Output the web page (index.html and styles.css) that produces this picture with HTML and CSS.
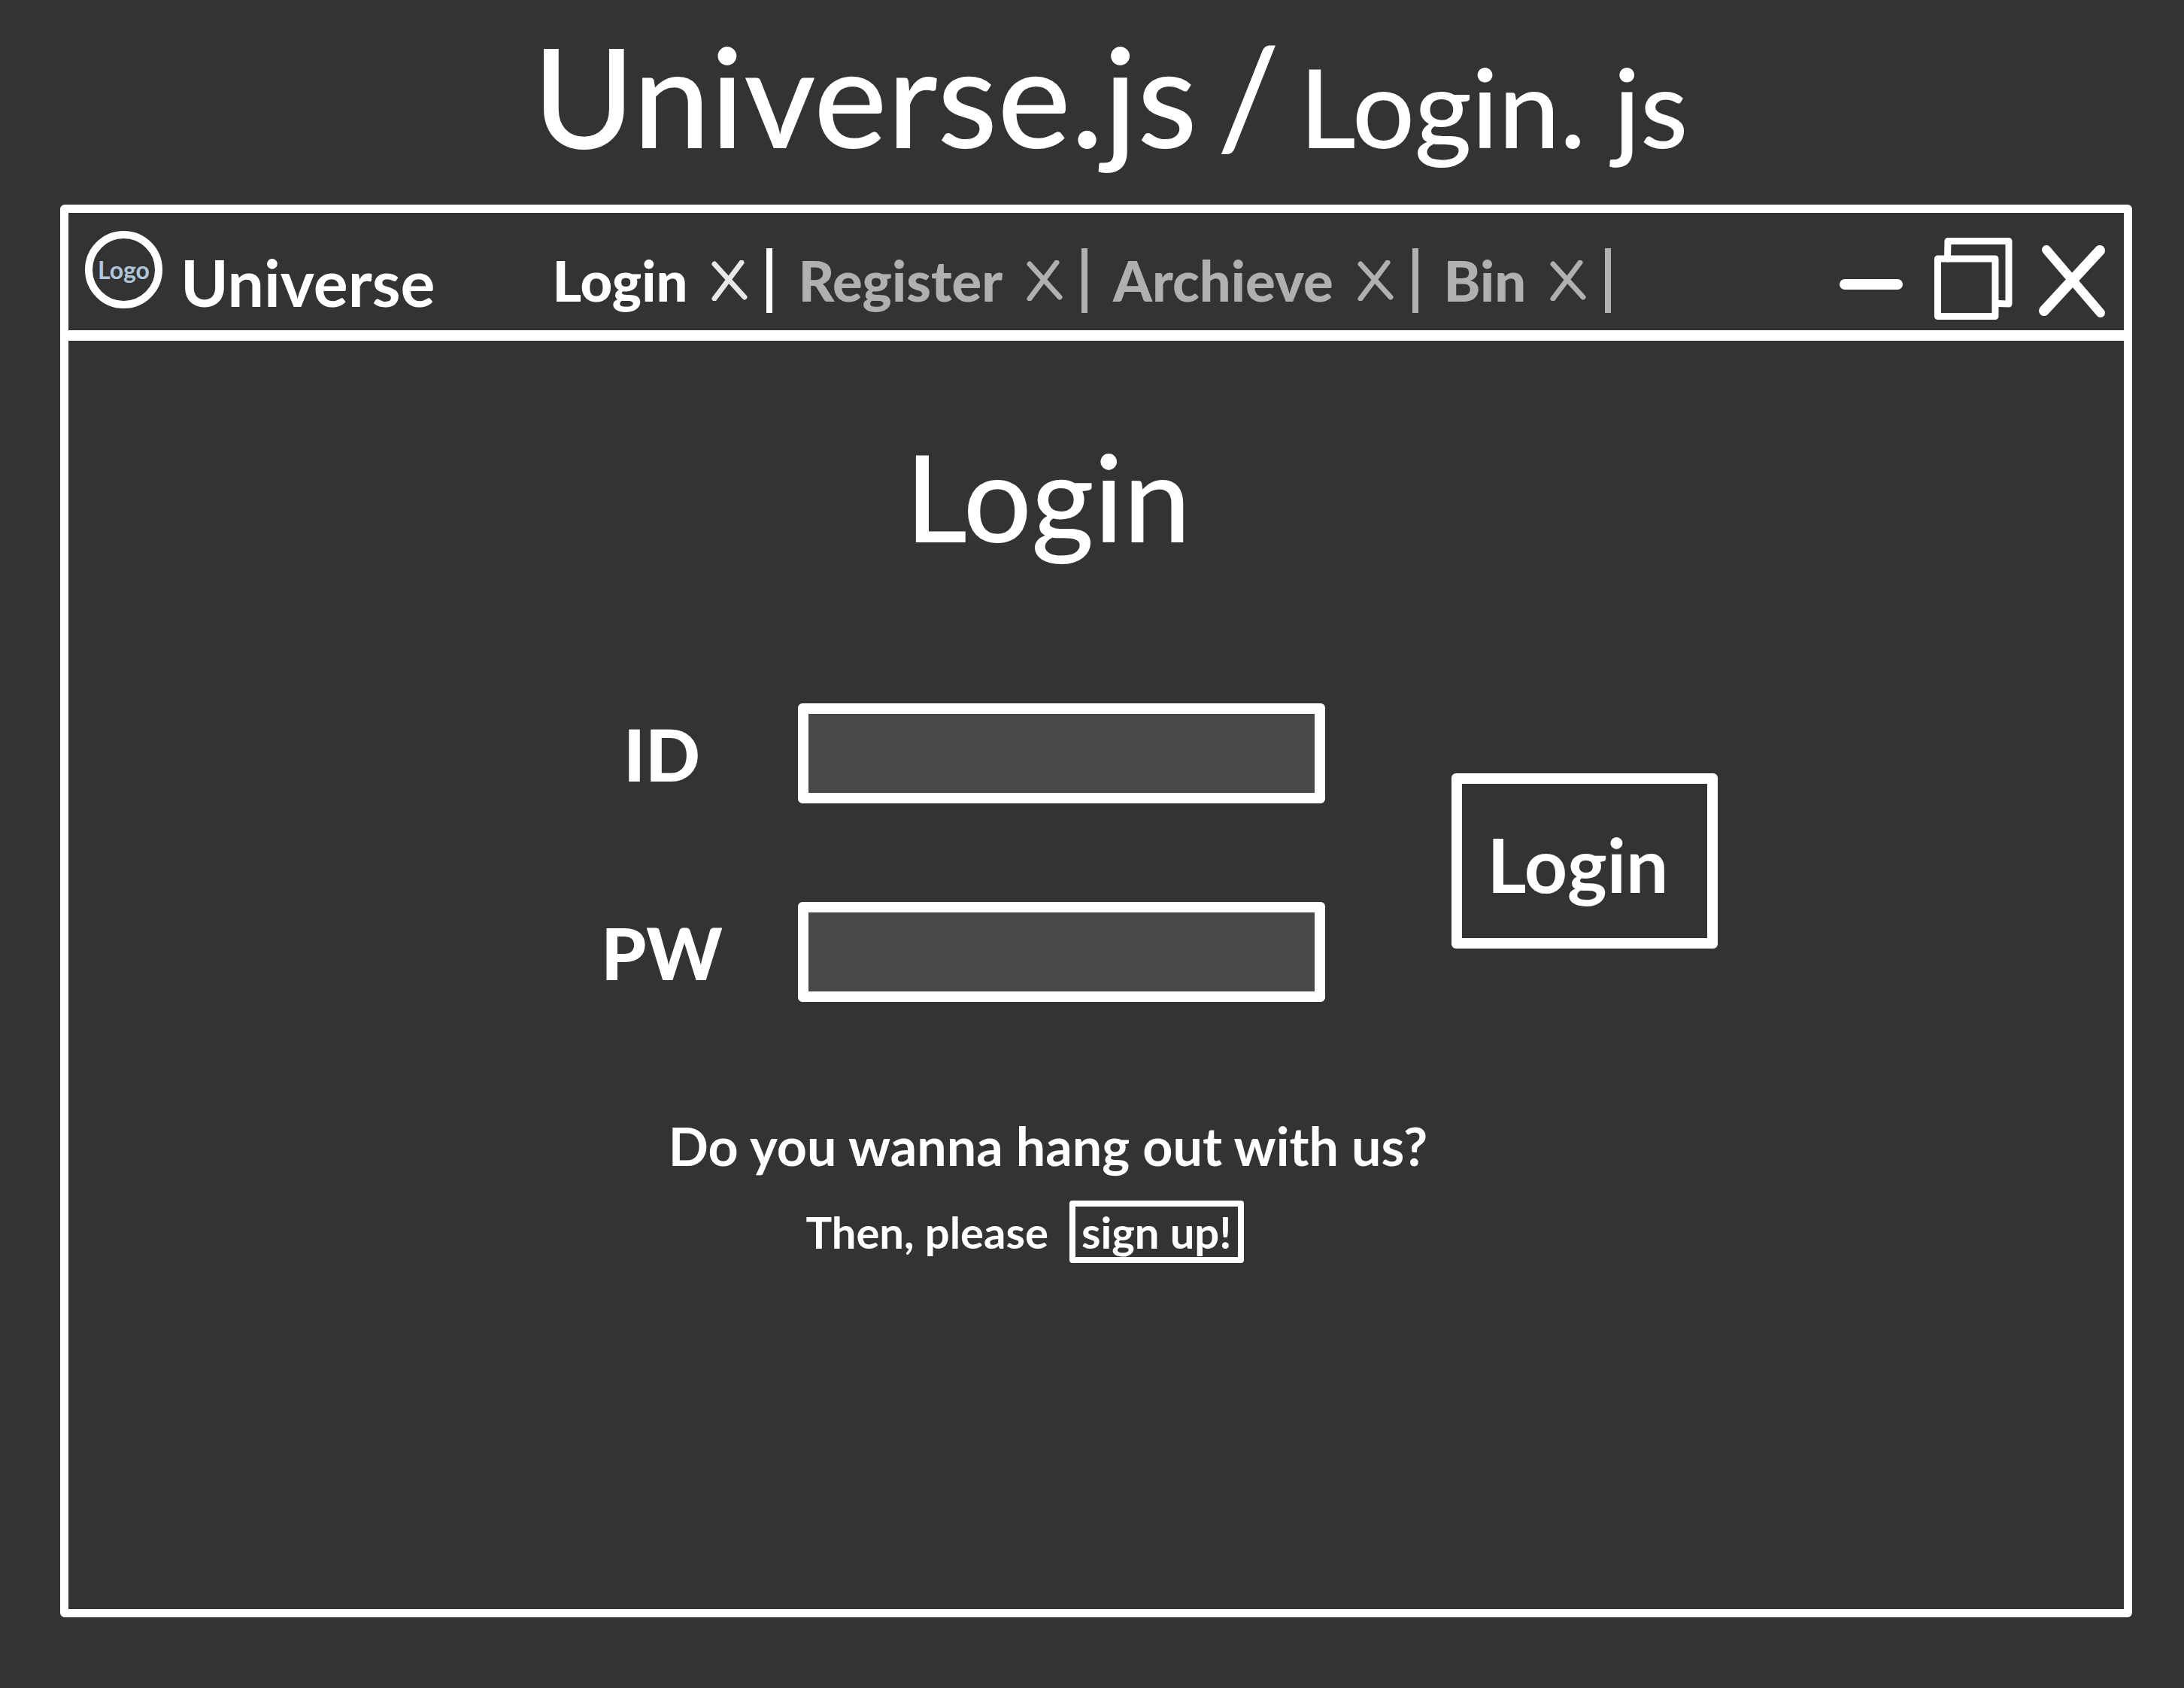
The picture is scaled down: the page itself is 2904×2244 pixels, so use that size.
FILE: index.html
```html
<!DOCTYPE html>
<html lang="en">
<head>
  <meta charset="utf-8">
  <meta name="viewport" content="width=device-width, initial-scale=1">
  <title>Universe – Login</title>
  <link rel="stylesheet" href="styles.css">
</head>
<body>
  <div class="page">
    <header class="page-title">
      <span class="page-title-app">Universe.js</span>
      <span class="page-title-app">/</span>
      <span class="page-title-file">Login. js</span>
    </header>

    <section class="window">
      <div class="titlebar">
        <div class="logo">Logo</div>
        <div class="brand">Universe</div>
        <nav class="tabs">
          <div class="tab tab-active">
            <a class="tab-link" href="#login">Login</a>
            <button class="tab-close" type="button" aria-label="Close Login">
              <svg class="tab-x" viewBox="0 0 48 54"><path d="M4 5 44 49M40 3 4 51"/></svg>
            </button>
          </div>
          <div class="tab">
            <a class="tab-link" href="#register">Register</a>
            <button class="tab-close" type="button" aria-label="Close Register">
              <svg class="tab-x" viewBox="0 0 48 54"><path d="M4 5 44 49M40 3 4 51"/></svg>
            </button>
          </div>
          <div class="tab">
            <a class="tab-link" href="#archieve">Archieve</a>
            <button class="tab-close" type="button" aria-label="Close Archieve">
              <svg class="tab-x" viewBox="0 0 48 54"><path d="M4 5 44 49M40 3 4 51"/></svg>
            </button>
          </div>
          <div class="tab">
            <a class="tab-link" href="#bin">Bin</a>
            <button class="tab-close" type="button" aria-label="Close Bin">
              <svg class="tab-x" viewBox="0 0 48 54"><path d="M4 5 44 49M40 3 4 51"/></svg>
            </button>
          </div>
        </nav>
        <div class="window-controls">
          <button class="control" type="button" aria-label="Minimize">
            <svg width="92" height="110" viewBox="0 0 92 110"><path d="M7 62H77" stroke-width="14"/></svg>
          </button>
          <button class="control" type="button" aria-label="Restore">
            <svg width="104" height="110" viewBox="0 0 104 110" stroke-width="9">
              <path d="M17.500 28 18 4.500H99V88L85 87.500"/>
              <path d="M4.500 28H81V104.500H4.500Z"/>
            </svg>
          </button>
          <button class="control" type="button" aria-label="Close">
            <svg width="90" height="110" viewBox="0 0 90 110">
              <path d="M11 16 83 100" stroke-width="12"/>
              <path d="M82 17 8 97" stroke-width="14"/>
            </svg>
          </button>
        </div>
      </div>

      <main class="content">
        <div class="login">
          <h1 class="login-title">Login</h1>
          <form class="login-form">
            <div class="fields">
              <label class="field-label" for="user-id">ID</label>
              <input class="field-input" id="user-id" type="text">
              <label class="field-label" for="user-pw">PW</label>
              <input class="field-input" id="user-pw" type="password">
            </div>
            <button class="login-button" type="button">Login</button>
          </form>
          <p class="invite">Do you wanna hang out with us?</p>
          <p class="signup">Then, please <a class="signup-link" href="#signup">sign up!</a></p>
        </div>
      </main>
    </section>
  </div>
</body>
</html>
```

FILE: styles.css
```css
* {
  box-sizing: border-box;
}

body {
  margin: 0;
  background: #333333;
  color: #ffffff;
  font-family: Lato, "Open Sans", sans-serif;
}

button {
  padding: 0;
  border: 0;
  background: none;
  color: inherit;
  font: inherit;
  cursor: pointer;
}

a {
  color: inherit;
  text-decoration: none;
}

svg {
  display: block;
  fill: none;
  stroke: currentColor;
  stroke-linecap: round;
  stroke-linejoin: round;
}

.page {
  display: flex;
  flex-direction: column;
  min-height: 100vh;
  padding: 17px 69px 94px 80px;
}

.page-title {
  display: flex;
  justify-content: center;
  align-items: baseline;
  gap: 26px;
  margin-bottom: 22px;
  padding-left: 38px;
  line-height: 218px;
  font-weight: 500;
}

.page-title-app {
  font-size: 184px;
}

.page-title-file {
  font-size: 146px;
}

.window {
  display: flex;
  flex: 1;
  flex-direction: column;
  border: 11px solid #ffffff;
  border-radius: 6px;
}

.titlebar {
  display: flex;
  align-items: center;
  height: 170px;
  padding: 0 24px 0 22px;
  border-bottom: 14px solid #ffffff;
}

.logo {
  display: flex;
  align-items: center;
  justify-content: center;
  width: 103px;
  height: 103px;
  margin-bottom: 6px;
  border: 10px solid #ffffff;
  border-radius: 50%;
  color: #b0c6da;
  font-size: 32px;
  font-weight: 700;
}

.brand {
  margin-left: 24px;
  padding-top: 28px;
  font-size: 86px;
  font-weight: 700;
  line-height: 96px;
}

.tabs {
  display: flex;
  flex: 1;
  gap: 34px;
  margin-left: 156px;
  padding-top: 24px;
  color: #b0b0b0;
}

.tab {
  display: flex;
  align-items: center;
  height: 86px;
  padding-right: 25px;
  background: linear-gradient(currentColor, currentColor) right / 8px 100% no-repeat;
}

.tab-active {
  color: #ffffff;
}

.tab-link {
  font-size: 74px;
  font-weight: 900;
  line-height: 86px;
}

.tab-close {
  margin: 0 8px 0 32px;
}

.tab-active .tab-close {
  color: #e8e8e8;
}

.tab-x {
  width: 48px;
  height: 54px;
  stroke-width: 7px;
}

.window-controls {
  display: flex;
  gap: 34px;
  padding-top: 20px;
}

.content {
  display: flex;
  justify-content: center;
  padding: 112px 0 64px 180px;
}

.login-title {
  margin: 0 308px 182px 0;
  font-size: 160px;
  font-weight: 500;
  line-height: 188px;
  text-align: center;
}

.login-form {
  display: flex;
  align-items: center;
  gap: 168px;
  margin-bottom: 150px;
}

.fields {
  display: grid;
  grid-template-columns: 138px 701px;
  align-items: center;
  gap: 131px 112px;
}

.field-label {
  display: flex;
  justify-content: center;
  font-size: 96px;
  font-weight: 900;
  line-height: 110px;
}

.field-input {
  width: 100%;
  height: 133px;
  padding: 0 24px;
  border: 14px solid #ffffff;
  border-radius: 6px;
  background: #484848;
  color: #ffffff;
  font: 500 58px Lato, sans-serif;
}

.login-button {
  width: 354px;
  height: 233px;
  margin-top: 22px;
  padding: 6px 18px 0 0;
  border: 14px solid #ffffff;
  border-radius: 6px;
  font-size: 100px;
  font-weight: 700;
}

.invite {
  margin: 0 308px 32px 0;
  font-size: 70px;
  font-weight: 700;
  line-height: 82px;
  text-align: center;
}

.signup {
  display: flex;
  align-items: center;
  justify-content: center;
  gap: 28px;
  margin: 0 370px 0 0;
  font-size: 58px;
  font-weight: 700;
  line-height: 67px;
}

.signup-link {
  padding: 0 8px;
  border: 8px solid #ffffff;
  border-radius: 4px;
}
```
